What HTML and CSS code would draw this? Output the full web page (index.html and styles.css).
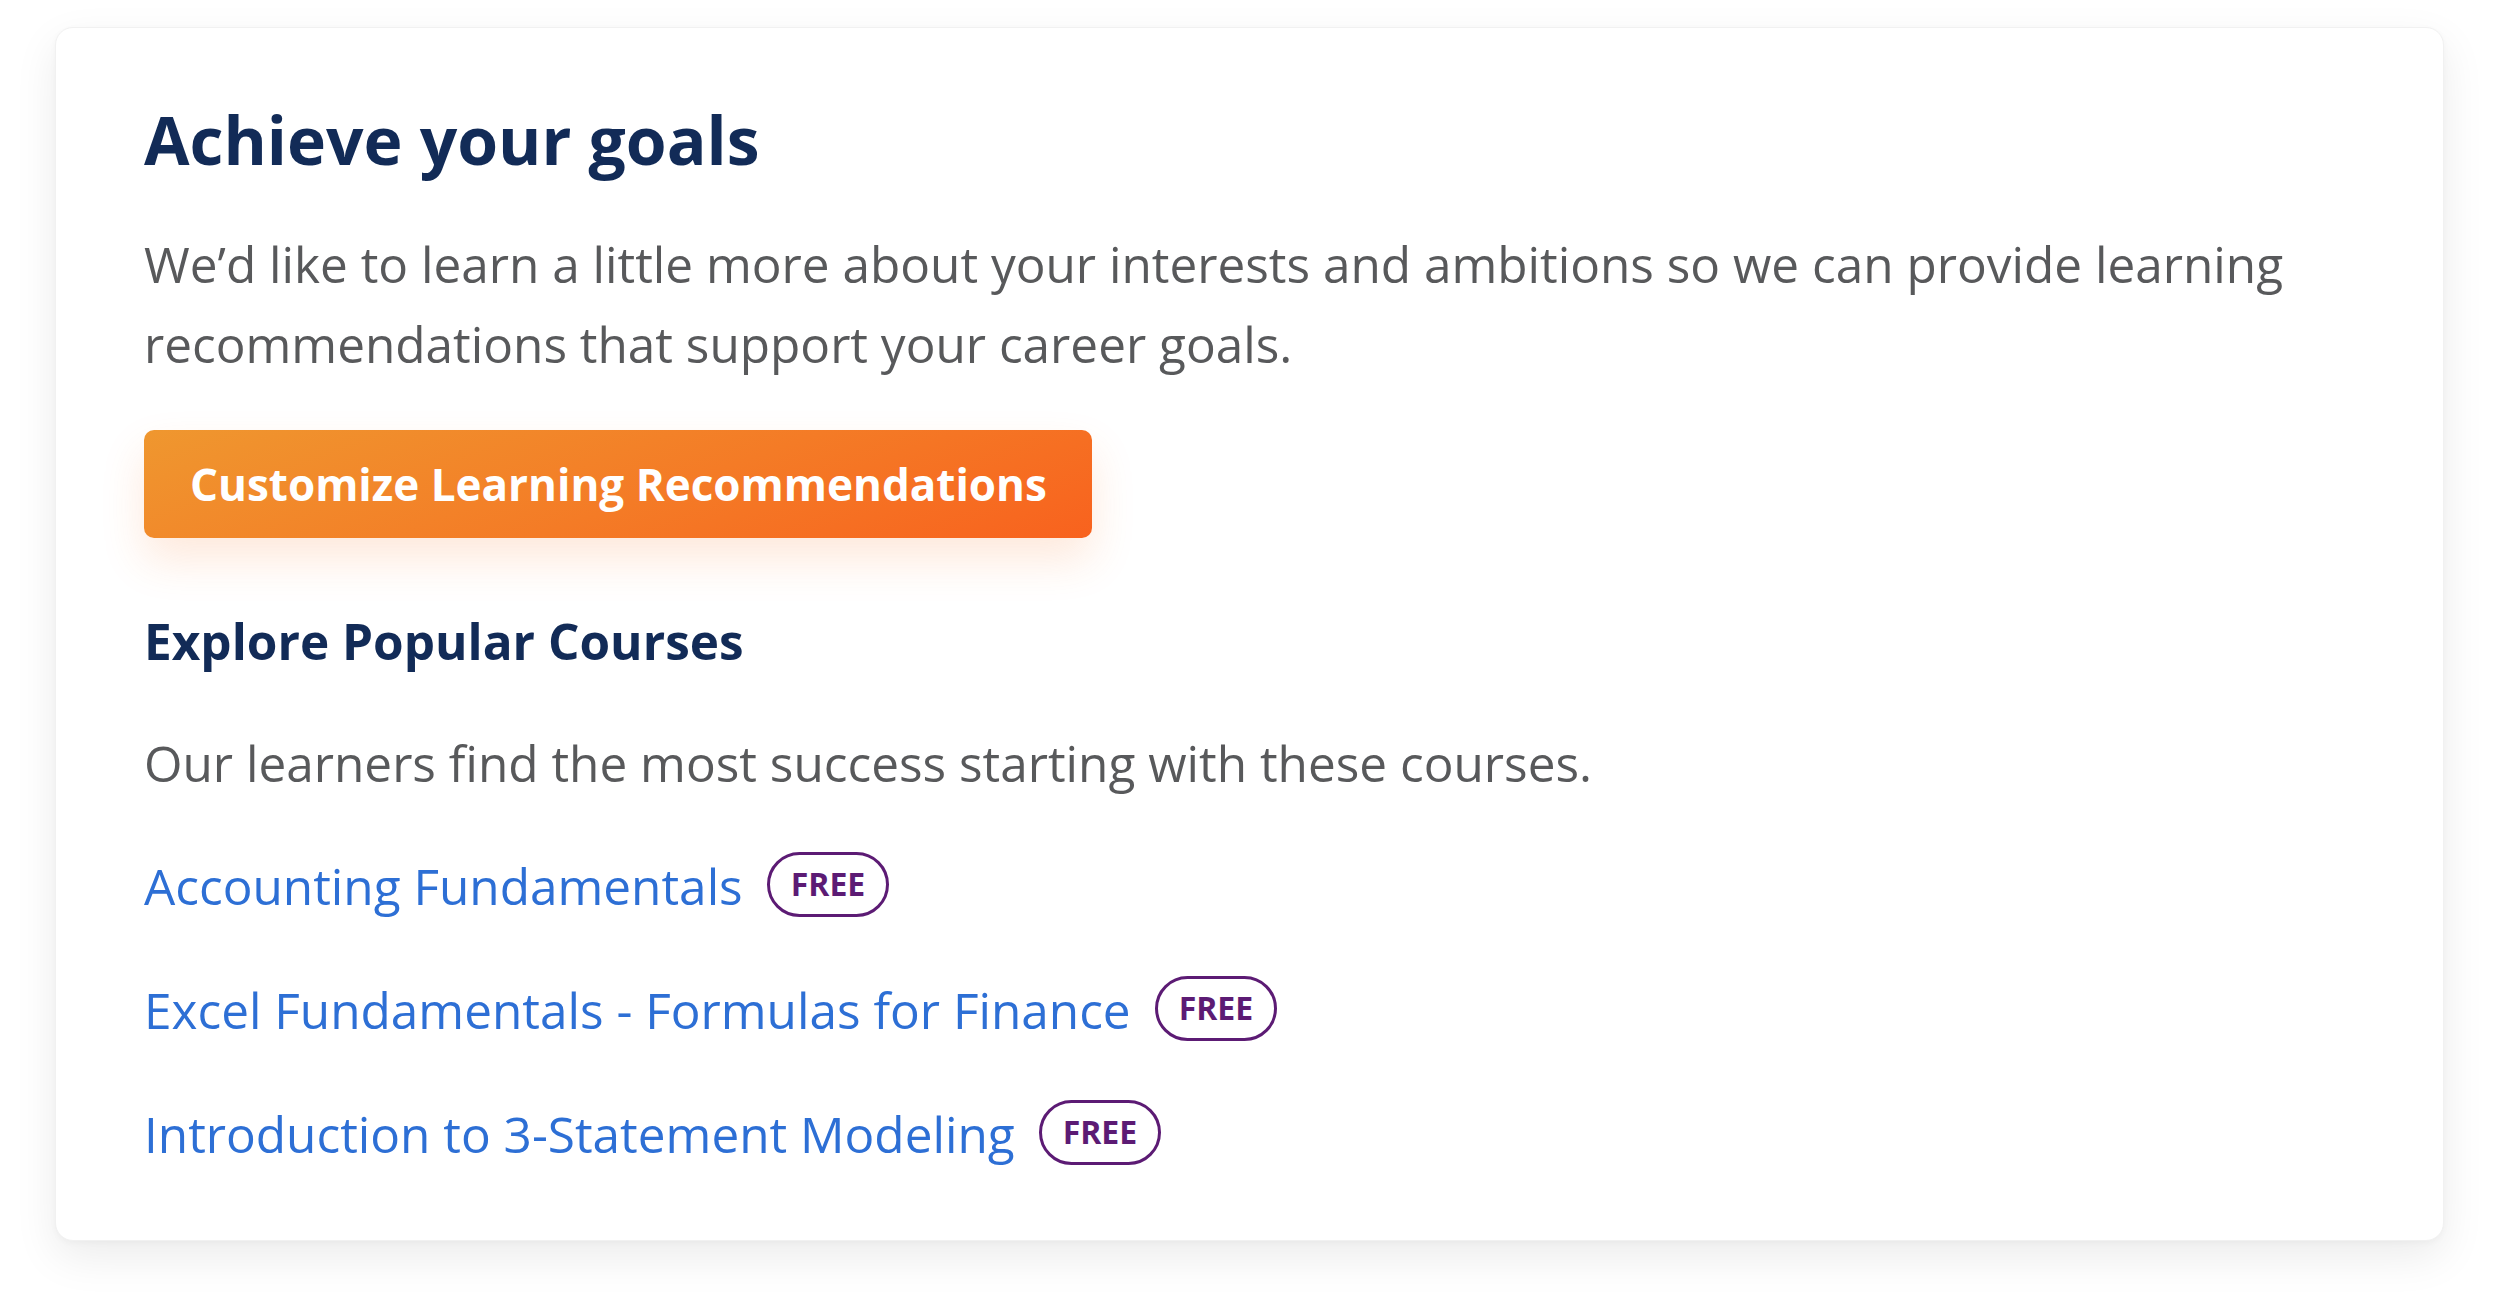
FILE: index.html
```html
<!DOCTYPE html>
<html lang="en">
<head>
<meta charset="utf-8">
<title>Achieve your goals</title>
<link rel="stylesheet" href="styles.css">
</head>
<body>
<main class="page">
  <section class="card">
    <h1 class="title">Achieve your goals</h1>
    <p class="lead">We’d like to learn a little more about your interests and ambitions so we can provide learning recommendations that support your career goals.</p>
    <div class="actions">
      <a class="btn" href="#">Customize Learning Recommendations</a>
    </div>
    <h2 class="subtitle">Explore Popular Courses</h2>
    <p class="note">Our learners find the most success starting with these courses.</p>
    <ul class="courses">
      <li class="course"><a class="course-link" href="#">Accounting Fundamentals</a><span class="badge">FREE</span></li>
      <li class="course"><a class="course-link" href="#">Excel Fundamentals - Formulas for Finance</a><span class="badge">FREE</span></li>
      <li class="course"><a class="course-link" href="#">Introduction to 3-Statement Modeling</a><span class="badge">FREE</span></li>
    </ul>
  </section>
</main>
</body>
</html>
```

FILE: styles.css
```css
* { box-sizing: border-box; }

html, body {
  margin: 0;
  padding: 0;
  background: #ffffff;
}

body {
  font-family: "Open Sans", "Liberation Sans", sans-serif;
  color: #58595b;
}

.page {
  padding: 27px 56px 56px 55px;
}

.card {
  background: #ffffff;
  border-radius: 18px;
  border: 1px solid #f1f1f1;
  box-shadow: 0 16px 44px rgba(0, 0, 0, 0.08), 0 2px 6px rgba(0, 0, 0, 0.03);
  padding: 72px 88px 66px 88px;
}

.title {
  margin: 0;
  font-size: 66px;
  line-height: 79px;
  font-weight: 700;
  color: #122b57;
}

.lead {
  margin: 45px 0 0 0;
  font-size: 49.5px;
  line-height: 80px;
  color: #58595b;
  max-width: 2200px;
}

.actions {
  margin-top: 46px;
  display: flex;
}

.btn {
  display: inline-block;
  padding: 24px 45px 24px 46px;
  font-size: 44px;
  line-height: 60px;
  font-weight: 700;
  color: #ffffff;
  text-decoration: none;
  border-radius: 10px;
  background: linear-gradient(160deg, #ef972f 0%, #f47b26 55%, #f8621e 100%);
  box-shadow: 0 22px 44px rgba(248, 118, 40, 0.16);
}

.subtitle {
  margin: 72px 0 0 0;
  font-size: 49.5px;
  line-height: 62px;
  font-weight: 700;
  color: #122b57;
}

.note {
  margin: 51px 0 0 0;
  font-size: 49.5px;
  line-height: 80px;
  color: #58595b;
}

.courses {
  list-style: none;
  margin: 43px 0 0 0;
  padding: 0;
  display: flex;
  flex-direction: column;
  gap: 44px;
}

.course {
  display: flex;
  align-items: center;
  gap: 24px;
  height: 80px;
}

.course-link {
  font-size: 49.5px;
  line-height: 80px;
  color: #2d6fd5;
  text-decoration: none;
}

.badge {
  display: inline-flex;
  align-items: center;
  justify-content: center;
  height: 65px;
  padding: 0 21px;
  margin-top: -4px;
  border: 3px solid #5c1b74;
  border-radius: 33px;
  font-size: 32px;
  font-weight: 700;
  color: #5c1b74;
  line-height: 1;
}
```
